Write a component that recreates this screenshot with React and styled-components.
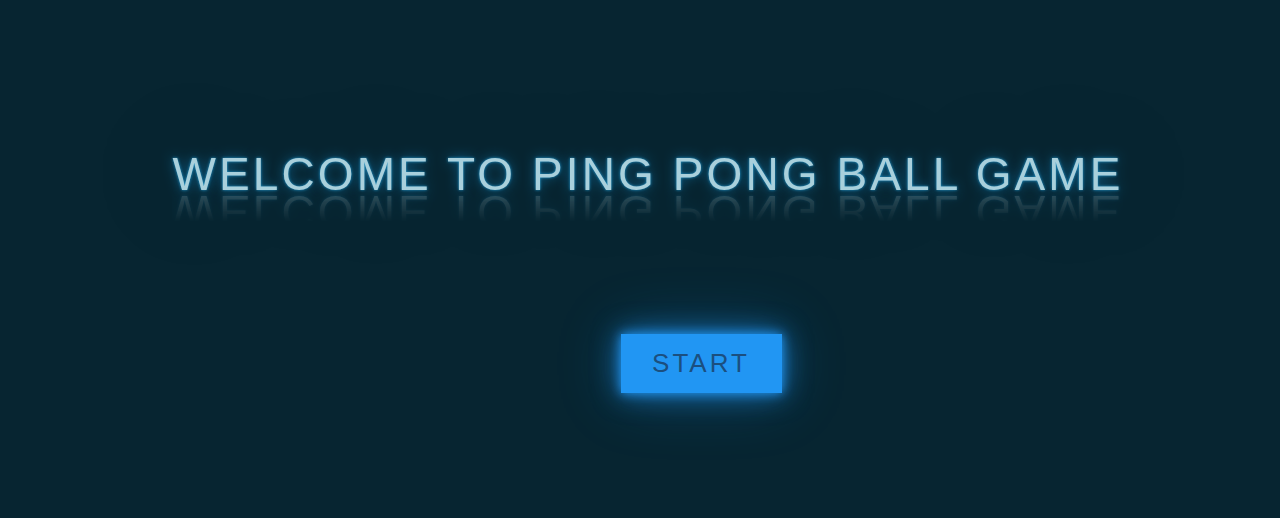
import React from 'react';
import styled, { createGlobalStyle } from 'styled-components';

const GlobalStyle = createGlobalStyle`
  html, body {
    margin: 0;
    padding: 0;
    background: #072531;
  }
  body {
    font-family: "Liberation Sans", Arial, sans-serif;
  }
`;

const StyledWrapper = styled.div`
  min-height: 518px;
  display: flex;
  flex-direction: column;
  align-items: center;
  padding-top: 151px;
  box-sizing: border-box;
`;

const StyledHeading = styled.h1`
  margin: 0 0 0 16px;
  font-size: 46px;
  line-height: 46px;
  font-weight: 400;
  letter-spacing: 3.1px;
  color: #a9d0dc;
  text-shadow:
    0 0 3px rgba(40, 170, 230, 0.85),
    0 0 12px rgba(20, 150, 220, 0.6),
    0 0 100px rgba(0, 0, 0, 0.4);
  -webkit-box-reflect: below -8px
    linear-gradient(transparent 30%, rgba(255, 255, 255, 0.28));
`;

const StyledButton = styled.button`
  margin: 137px 0 0 122px;
  width: 161px;
  height: 59px;
  border: none;
  background: #2196f3;
  color: #1b4f7f;
  font-family: "Liberation Sans", Arial, sans-serif;
  font-size: 26px;
  letter-spacing: 3px;
  padding: 0;
  cursor: pointer;
  box-shadow:
    0 0 10px #2196f3,
    0 0 28px rgba(33, 150, 243, 0.75),
    0 0 64px rgba(33, 150, 243, 0.3);
`;

const App = () => (
  <>
    <GlobalStyle />
    <StyledWrapper>
      <StyledHeading>WELCOME TO PING PONG BALL GAME</StyledHeading>
      <StyledButton>START</StyledButton>
    </StyledWrapper>
  </>
);

export default App;
